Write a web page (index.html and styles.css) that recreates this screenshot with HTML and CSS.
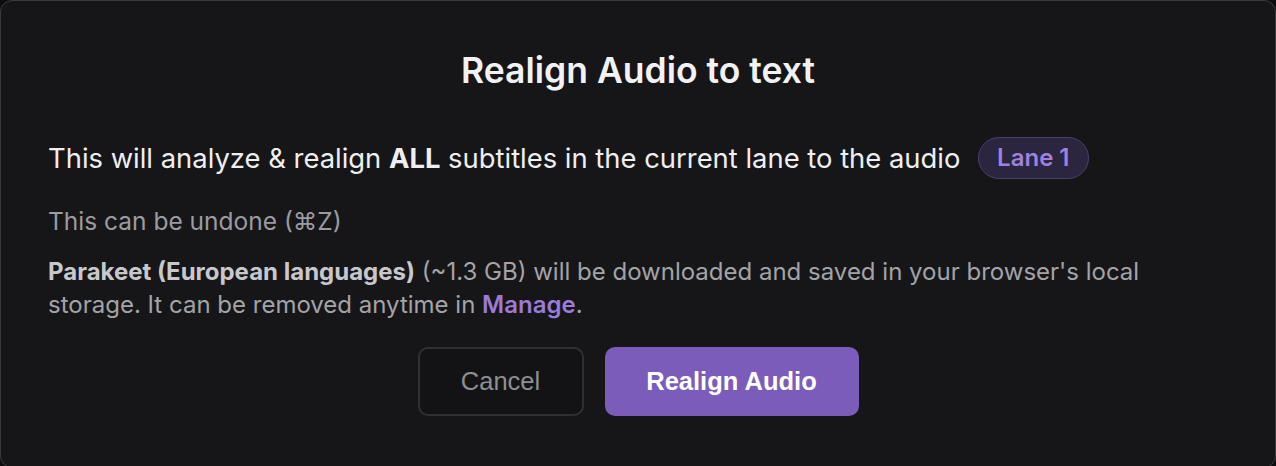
FILE: index.html
```html
<!DOCTYPE html>
<html>
<head>
<meta charset="utf-8">
<link rel="stylesheet" href="styles.css">
</head>
<body>
<div class="dialog">
  <h2 class="title">Realign Audio to text</h2>
  <p class="lead">This will analyze &amp; realign <strong>ALL</strong> subtitles in the current lane to the audio <span class="badge">Lane 1</span></p>
  <p class="note">This can be undone (⌘Z)</p>
  <p class="info"><strong>Parakeet (European languages)</strong> (~1.3 GB) will be downloaded and saved in your browser's local storage. It can be removed anytime in <a class="link" href="#">Manage</a>.</p>
  <div class="actions">
    <button class="btn btn-cancel">Cancel</button>
    <button class="btn btn-primary">Realign Audio</button>
  </div>
</div>
</body>
</html>
```

FILE: styles.css
```css
html, body {
  margin: 0;
  padding: 0;
  background: #0d0d0f;
  height: 466px;
  overflow: hidden;
}
.dialog {
  box-sizing: border-box;
  width: 1276px;
  height: 468px;
  background: #161618;
  border: 1px solid #3a3a3e;
  border-radius: 12px;
  padding: 50px 47px 0 47px;
  font-family: Inter, "Noto Sans", sans-serif;
  color: #ededf0;
}
.title {
  margin: 0;
  text-align: center;
  font-size: 35.5px;
  font-weight: 600;
  line-height: 40px;
  color: #f2f2f4;
}
.lead {
  margin: 45px 0 0 0;
  font-size: 27.4px;
  line-height: 44px;
  display: flex;
  align-items: center;
  white-space: pre;
  color: #efeff1;
}
.lead strong {
  font-weight: 700;
}
.badge {
  display: inline-flex;
  align-items: center;
  height: 42px;
  box-sizing: border-box;
  padding: 0 18px;
  margin-left: 10px;
  border-radius: 21px;
  background: #2c2540;
  border: 1px solid #4a3f6b;
  color: #9f82dc;
  font-size: 24px;
  font-weight: 600;
}
.note {
  margin: 25px 0 0 0;
  font-size: 24.5px;
  line-height: 32px;
  color: #9b9ba0;
}
.info {
  margin: 18px 0 0 0;
  font-size: 24px;
  line-height: 33px;
  color: #a3a3a8;
}
.info strong {
  color: #c8c8cc;
  font-weight: 700;
}
.link {
  color: #9b7ad8;
  font-weight: 600;
  text-decoration: none;
}
.actions {
  display: flex;
  justify-content: center;
  gap: 21px;
  margin-top: 26px;
}
.btn {
  height: 69px;
  border-radius: 10px;
  font-family: "Liberation Sans", Arial, sans-serif;
  font-size: 25.5px;
  cursor: pointer;
}
.btn-cancel {
  width: 166px;
  background: #131315;
  border: 2px solid #303034;
  color: #8e8e93;
}
.btn-primary {
  width: 254px;
  background: #7c5cba;
  border: none;
  color: #ffffff;
  font-weight: 700;
}
```
